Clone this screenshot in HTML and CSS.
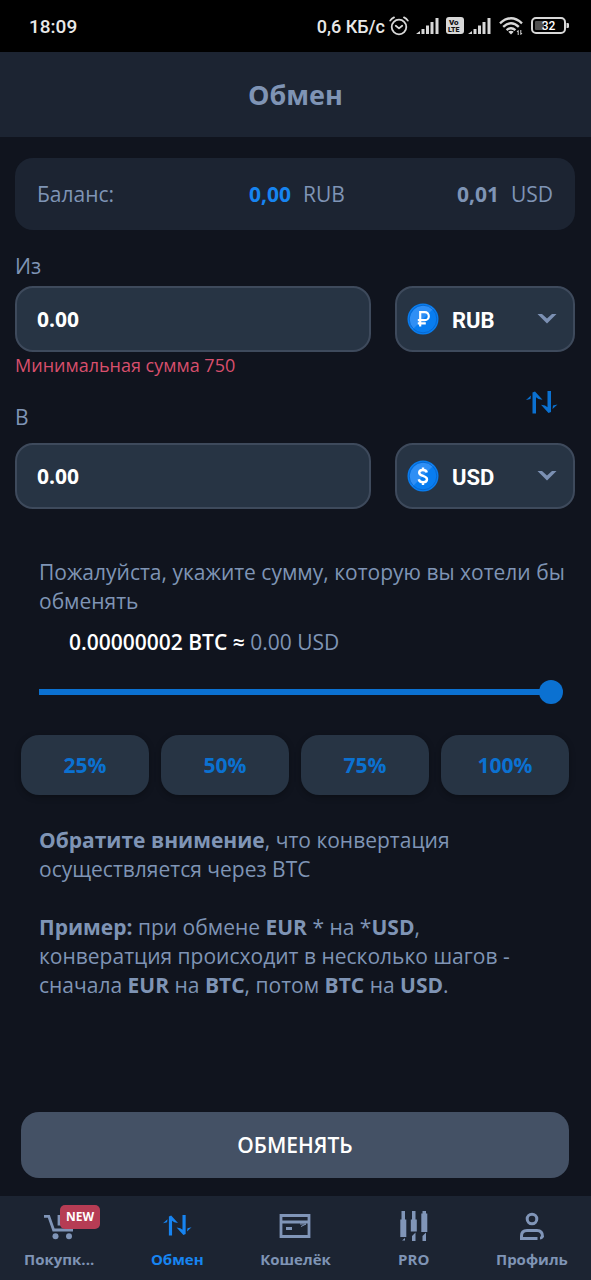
FILE: index.html
```html
<!DOCTYPE html>
<html lang="ru">
<head>
<meta charset="utf-8">
<meta name="viewport" content="width=device-width, initial-scale=1">
<title>Обмен</title>
<link rel="stylesheet" href="styles.css">
</head>
<body>
<div class="status">
  <span class="status-time">18:09</span>
  <div class="status-right">
    <span>0,6 КБ/с</span>
    <svg width="20" height="20" viewBox="0 0 20 20" fill="none" stroke="#d8d8d8" stroke-width="1.8" stroke-linecap="round" stroke-linejoin="round"><circle cx="10" cy="11" r="7.3"/><path d="M6.8 9.8l3.2 2.6 3.2-2.6M1.2 4.6Q2.5 2.4 5 1.4M18.800 4.600Q17.500 2.400 15 1.400"/></svg>
    <svg class="signal" width="23" height="18" viewBox="0 0 23 18" fill="#d8d8d8"><path d="M0 17l4-3v3zM5.500 12h3v5h-3zM10 8.500h3v8.500h-3zM14.500 5h3v12h-3zM19.500 1h3v16h-3z"/></svg>
    <svg width="18" height="18" viewBox="0 0 18 18"><rect width="18" height="17" rx="3" fill="#d8d8d8"/><g fill="#111" font-family="Roboto, sans-serif" font-weight="900" font-size="8"><text x="3" y="8">Vo</text><text x="2" y="15" font-size="7">LTE</text></g></svg>
    <svg width="23" height="18" viewBox="0 0 23 18" fill="#d8d8d8"><path d="M0 17l4-3v3zM5.500 12h3v5h-3zM10 8.500h3v8.500h-3zM14.500 5h3v12h-3zM19.500 1h3v16h-3z"/></svg>
    <svg class="wifi" width="24" height="20" viewBox="0 0 24 20" fill="none" stroke="#d8d8d8" stroke-width="2.400"><path d="M1 7.300Q12-2.700 23 7.300M4.200 10.800Q12 3.800 19.800 10.800M7.600 14.200Q12 10.300 16.400 14.200"/><path d="M12 18.500l-2.700-2.700Q12 13.800 14.700 15.800z" fill="#d8d8d8" stroke="none"/><path d="M19.200 19v-4.500l-1.200 1.500M21.800 14v4.500l1.200-1.500" stroke-width="1"/></svg>
    <svg class="battery" width="38" height="18" viewBox="0 0 38 18"><rect x="1" y="1" width="33" height="15" rx="4" fill="none" stroke="#d8d8d8" stroke-width="2"/><rect x="4" y="4" width="9" height="9" rx="1" fill="#505050"/><path d="M35.500 6h1.200q1.300 0 1.300 1.200v2.600q0 1.200-1.300 1.200h-1.200z" fill="#d8d8d8"/><text x="17.500" y="13" text-anchor="middle" font-family="Roboto, sans-serif" font-size="12" font-weight="500" fill="#fff">32</text></svg>
  </div>
</div>
<header class="title-bar"><h1>Обмен</h1></header>

<main class="content">
  <section class="balance">
    <span>Баланс:</span>
    <span class="amount"><b class="accent">0,00</b> RUB</span>
    <span class="amount"><b>0,01</b> USD</span>
  </section>

  <form class="exchange">
    <label class="caption" for="from">Из</label>
    <div class="row">
      <input class="field" id="from" type="text" inputmode="decimal" value="0.00">
      <div class="currency">
        <svg class="coin" width="32" height="32" viewBox="0 0 32 32"><circle cx="16" cy="16" r="15.500" fill="#087df0"/><path d="M5.500 26.500A15 15 0 0 1 26.500 5.500z" fill="#2f8ff5"/><circle cx="16" cy="16" r="13.800" fill="none" stroke="#0868cf"/><path d="M13.200 23.500V9.200h4.600a4 4 0 0 1 0 8h-7M10.800 20.300h8" fill="none" stroke="#fff" stroke-width="2.200"/></svg>
        <select class="select" aria-label="Исходная валюта"><option>RUB</option><option>USD</option></select>
        <svg class="chevron" width="20" height="12" viewBox="0 0 20 12"><path d="M.5 1h4.500l5 4.500L15 1h4.500L10 10.500z" fill="#7b90b3"/></svg>
      </div>
    </div>
    <div class="between">
      <div class="between-text">
        <p class="error">Минимальная сумма 750</p>
        <label class="caption" for="to">В</label>
      </div>
      <button class="swap" type="button" aria-label="Поменять валюты местами">
        <svg width="32" height="23" viewBox="0 0 32 23" fill="#0b71d1"><path d="M6.500 22.500V1.500L9 .5l7.500 8.300-4-.8-2.500-1.800v16.300zM0 9l5-4.500-.5 3.500zM25 0v21l-2.500 1-7.500-8.300 4 .8 2.500 1.800V0zM31.500 13.500l-5 4.500.5-3.500z"/></svg>
      </button>
    </div>
    <div class="row">
      <input class="field" id="to" type="text" inputmode="decimal" value="0.00">
      <div class="currency">
        <svg class="coin" width="32" height="32" viewBox="0 0 32 32"><circle cx="16" cy="16" r="15.500" fill="#087df0"/><path d="M5.500 26.500A15 15 0 0 1 26.500 5.500z" fill="#2f8ff5"/><circle cx="16" cy="16" r="13.800" fill="none" stroke="#0868cf"/><path d="M19.800 12.500C19 9 12.200 9.200 12.200 12.800c0 3.800 7.800 2.500 7.800 6.500 0 4-7.600 4-8.200 0M16 7.500v3M16 22v3" fill="none" stroke="#fff" stroke-width="2.400"/></svg>
        <select class="select" aria-label="Целевая валюта"><option>USD</option><option>RUB</option></select>
        <svg class="chevron" width="20" height="12" viewBox="0 0 20 12"><path d="M.5 1h4.500l5 4.500L15 1h4.500L10 10.500z" fill="#7b90b3"/></svg>
      </div>
    </div>

    <p class="hint">Пожалуйста, укажите сумму, которую вы хотели бы обменять</p>
    <p class="rate"><b>0.00000002 BTC ≈</b> 0.00 USD</p>
    <input class="slider" type="range" min="0" max="100" value="100" aria-label="Доля баланса">
    <div class="percents">
      <button type="button">25%</button>
      <button type="button">50%</button>
      <button type="button">75%</button>
      <button type="button">100%</button>
    </div>
    <div class="notes">
      <p><b>Обратите внимение</b>, что конвертация осуществляется через BTC</p>
      <p><b>Пример:</b> при обмене <b>EUR</b> * на *<b>USD</b>, конвератция происходит в несколько шагов - сначала <b>EUR</b> на <b>BTC</b>, потом <b>BTC</b> на <b>USD</b>.</p>
    </div>
    <button class="submit" type="submit">ОБМЕНЯТЬ</button>
  </form>
</main>

<nav class="tabs">
  <a class="tab" href="#buy">
    <span class="tab-icon">
      <svg width="32" height="32" viewBox="0 0 32 32" fill="none" stroke="#8095b8" stroke-width="2.800"><path d="M1 6.400h4.800L10.600 20H30M16 5v9h5"/><circle cx="12.500" cy="26.300" r="3" fill="#8095b8" stroke="none"/><circle cx="26" cy="26.300" r="3" fill="#8095b8" stroke="none"/></svg>
      <span class="badge">NEW</span>
    </span>
    <span class="tab-label">Покупк...</span>
  </a>
  <a class="tab active" href="#exchange" aria-current="page">
    <span class="tab-icon"><svg width="29" height="21" viewBox="0 0 32 23" fill="#1784f1"><path d="M6.500 22.500V1.500L9 .5l7.500 8.300-4-.8-2.500-1.800v16.300zM0 9l5-4.500-.5 3.500zM25 0v21l-2.500 1-7.500-8.300 4 .8 2.500 1.800V0zM31.500 13.500l-5 4.500.5-3.500z"/></svg></span>
    <span class="tab-label">Обмен</span>
  </a>
  <a class="tab" href="#wallet">
    <span class="tab-icon"><svg width="32" height="26" viewBox="0 0 32 26" fill="none" stroke="#8095b8" stroke-width="2.800"><path d="M2 2.500h28v21H2zM2 9h28M7 15.500h6"/><path d="M21 11h6l-5 2.500" stroke-width="1"/></svg></span>
    <span class="tab-label">Кошелёк</span>
  </a>
  <a class="tab" href="#pro">
    <span class="tab-icon"><svg width="28" height="32" viewBox="0 0 28 32" fill="#8095b8"><path d="M1.500 1H5v8.500h1.300V27H.3V9.500h1.200zM12 1h3.500v8.500h1.300v12h-6v-12H12zM22.500 1H26v2.500h1.300V22h-6V3.500h1.200zM5 28v2.500H2zM15.500 22.500V31H12v-5zM26 22.500V31h-3.500v-5z"/></svg></span>
    <span class="tab-label">PRO</span>
  </a>
  <a class="tab" href="#profile">
    <span class="tab-icon"><svg width="26" height="30" viewBox="0 0 26 30" fill="none" stroke="#8095b8" stroke-width="3"><circle cx="13" cy="8" r="4.800"/><path d="M18.500 27.500H2.500v-2.500q0-5.500 5.500-5.500h10q5.500 0 5.500 6-1 1.500-2.500 1.500"/></svg></span>
    <span class="tab-label">Профиль</span>
  </a>
</nav>
</body>
</html>
```
FILE: styles.css
```css
* { box-sizing: border-box; }

body {
  margin: 0;
  min-height: 100vh;
  display: flex;
  flex-direction: column;
  background: #10141e;
  color: #7f94b5;
  font-family: "Open Sans", "Noto Sans", sans-serif;
  font-size: 21px;
  line-height: 29px;
}

h1, p { margin: 0; }
button, input, select { font: inherit; color: inherit; margin: 0; }
svg { display: block; flex: none; }

.status {
  height: 52px;
  padding: 0 22px 0 29px;
  display: flex;
  align-items: center;
  justify-content: space-between;
  background: #000;
  color: #e8e8e8;
  font-family: Roboto, sans-serif;
  font-weight: 500;
  font-size: 18px;
}
.status-time { font-size: 19px; }
.status-right { display: flex; align-items: center; gap: 4px; }
.status .signal { margin: 0 3px; }
.status .wifi { margin-left: 4px; }
.status .battery { margin-left: 4px; }

.title-bar {
  height: 85px;
  display: flex;
  align-items: center;
  justify-content: center;
  background: #1c2432;
}
.title-bar h1 { font-size: 27px; font-weight: 700; }

.content {
  flex: 1;
  display: flex;
  flex-direction: column;
  padding: 21px 16px 18px 15px;
}

.balance {
  height: 72px;
  padding: 0 22px;
  display: grid;
  grid-template-columns: 1fr auto auto;
  gap: 112px;
  align-items: center;
  border-radius: 18px;
  background: #1c2432;
}
.amount { display: flex; gap: 12px; }
.accent { color: #1784f1; }

.exchange { flex: 1; display: flex; flex-direction: column; margin-top: 21px; }
.caption { line-height: 30px; }
.row { display: grid; grid-template-columns: 1fr 180px; gap: 24px; }
.exchange > .caption { margin-bottom: 5px; }

.field, .currency {
  width: 100%;
  height: 66px;
  border: 2px solid #3e4a5c;
  border-radius: 18px;
  background: #273444;
  color: #fff;
}
.field { padding: 0 20px; font-weight: 700; }
.currency { position: relative; }
.select {
  width: 100%;
  height: 100%;
  padding: 2px 50px 0 55px;
  border: 0;
  background: none;
  appearance: none;
  font-family: Roboto, sans-serif;
  font-size: 22px;
  font-weight: 700;
}
.select option { background: #273444; }
.coin, .chevron { position: absolute; pointer-events: none; }
.coin { left: 10px; top: 15px; }
.chevron { right: 16px; top: 25px; }

.between {
  height: 91px;
  padding-bottom: 11px;
  display: flex;
  justify-content: space-between;
  align-items: flex-end;
}
.between-text { height: 100%; display: flex; flex-direction: column; justify-content: space-between; }
.error { font-size: 18px; line-height: 26px; color: #d84f6c; }
.swap { padding: 18px 17px; border: 0; background: none; }

.hint { margin: 49px 0 12px 24px; }
.rate { margin-left: 54px; }
.rate b { color: #fff; font-weight: 600; }

.slider {
  height: 24px;
  margin: 23px 12px 31px 24px;
  appearance: none;
  background: linear-gradient(#0b71d1, #0b71d1) left center / calc(100% - 12px) 6px no-repeat;
  border-radius: 3px;
}
.slider::-webkit-slider-thumb {
  appearance: none;
  width: 24px;
  height: 24px;
  border-radius: 50%;
  background: #0b71d1;
}

.percents {
  display: grid;
  grid-template-columns: repeat(4, 1fr);
  gap: 12px;
  margin: 0 6px;
}
.percents button {
  height: 60px;
  padding: 0;
  border: 0;
  border-radius: 18px;
  background: #273444;
  color: #0b71d1;
  font-weight: 700;
  box-shadow: 0 2px 6px rgba(0, 0, 0, 0.3);
}

.notes { display: grid; gap: 29px; margin: 31px 24px 24px; }

.submit {
  height: 66px;
  margin: auto 6px 0;
  border: 0;
  border-radius: 18px;
  background: #445165;
  color: #fff;
  font-weight: 600;
}

.tabs {
  height: 84px;
  display: grid;
  grid-template-columns: repeat(5, 1fr);
  background: #1c2432;
}
.tab {
  padding-top: 13px;
  display: flex;
  flex-direction: column;
  align-items: center;
  gap: 5px;
  color: inherit;
  text-decoration: none;
  font-size: 15px;
  line-height: 24px;
  font-weight: 700;
}
.tab-icon { position: relative; height: 33px; display: flex; align-items: center; }
.tab-label { white-space: nowrap; }
.active { color: #1784f1; }
.badge {
  position: absolute;
  left: 17px;
  top: -4px;
  padding: 0 6px;
  border-radius: 5px;
  background: #b63c54;
  color: #fff;
  font-size: 12px;
}
```
